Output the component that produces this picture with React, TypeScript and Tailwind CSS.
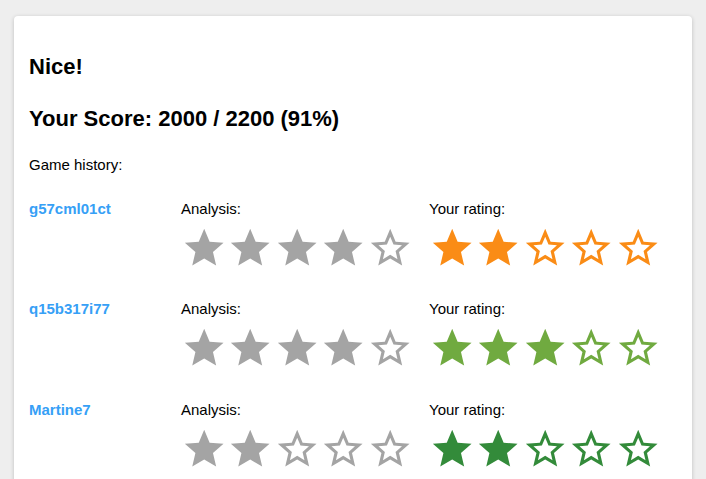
const FULL_STAR =
  "M12 17.27L18.18 21l-1.64-7.03L22 9.24l-7.19-.61L12 2 9.19 8.63 2 9.24l5.46 4.73L5.82 21z";
const EMPTY_STAR =
  "M22 9.24l-7.19-.62L12 2 9.19 8.63 2 9.24l5.46 4.73L5.82 21 12 17.27 18.18 21l-1.63-7.03L22 9.24zM12 15.4l-3.76 2.27 1-4.28-3.32-2.88 4.38-.38L12 6.1l1.71 4.04 4.38.38-3.32 2.88 1 4.28L12 15.4z";

type Game = { player: string; analysis: number; rating: number; color: string };

const games: Game[] = [
  { player: "g57cml01ct", analysis: 4, rating: 2, color: "text-[#fa8c16]" },
  { player: "q15b317i77", analysis: 4, rating: 3, color: "text-[#70aa40]" },
  { player: "Martine7", analysis: 2, rating: 2, color: "text-[#338b3a]" },
];

function Stars({ label, value, color }: { label: string; value: number; color: string }) {
  return (
    <div>
      <p>{label}</p>
      <div
        role="img"
        aria-label={`${value} of 5 stars`}
        className={`mt-[7px] mb-px grid w-[232px] grid-cols-5 ${color}`}
      >
        {[1, 2, 3, 4, 5].map((n) => (
          <svg key={n} viewBox="0 0 24 24" fill="currentColor" className="block w-full">
            <path d={n <= value ? FULL_STAR : EMPTY_STAR} />
          </svg>
        ))}
      </div>
    </div>
  );
}

export default function App() {
  return (
    <div className="h-screen overflow-hidden bg-[#eeeeee] px-3.5 pt-4 font-['Liberation_Sans',Arial,sans-serif] text-[15px] leading-[18px] text-black">
      <main className="min-h-screen rounded-[4px] bg-white px-[15px] pt-[37px] pb-8 shadow-[0_1px_4px_rgba(0,0,0,0.2)]">
        <h2 className="text-[22px] leading-7 font-bold">Nice!</h2>
        <h2 className="mt-6 text-[22px] leading-7 font-bold">Your Score: 2000 / 2200 (91%)</h2>
        <p className="mt-[23px]">Game history:</p>
        <ul className="mt-[26px] flex flex-col gap-7">
          {games.map((game) => (
            <li key={game.player} className="grid grid-cols-[152px_1fr_1fr]">
              <div>
                <a href="#" className="font-bold text-[#36a0f6]">
                  {game.player}
                </a>
              </div>
              <Stars label="Analysis:" value={game.analysis} color="text-[#a4a4a4]" />
              <Stars label="Your rating:" value={game.rating} color={game.color} />
            </li>
          ))}
        </ul>
      </main>
    </div>
  );
}
